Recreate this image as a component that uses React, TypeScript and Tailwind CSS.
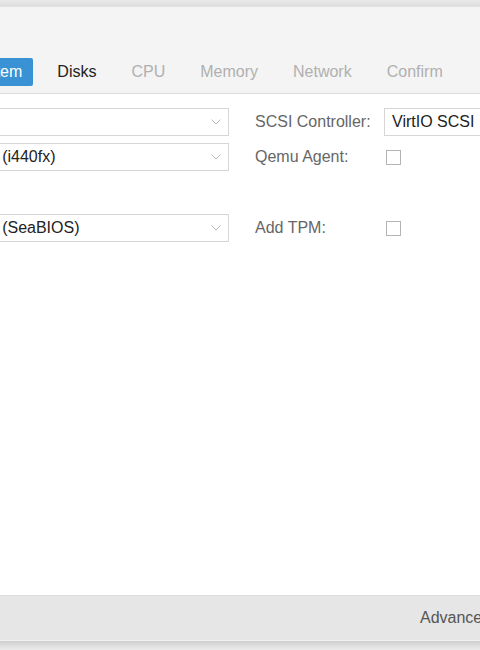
import React from 'react';

const font = { fontFamily: '"Liberation Sans", Arial, sans-serif' };

const Chevron: React.FC = () => (
    <svg width="10" height="6" viewBox="0 0 10 6" className="shrink-0">
        <path d="M0.5 0.5 L5 5 L9.5 0.5" fill="none" stroke="#b8b8b8" strokeWidth="1" />
    </svg>
);

const Combo: React.FC<{ value: string; className?: string; chevron?: boolean }> = ({ value, className, chevron = true }) => (
    <div
        className={
            'h-[28px] flex items-center justify-between border border-[#d6d6d6] bg-white pl-[7px] pr-[7px] text-[16px] text-[#222] whitespace-nowrap ' +
            (className ?? '')
        }
    >
        <span>{value}</span>
        {chevron && <Chevron />}
    </div>
);

const Checkbox: React.FC = () => (
    <div className="w-[15px] h-[15px] border border-[#b4b4b4] bg-white ml-[2px]" />
);

const tabs = [
    { label: 'System', state: 'active' },
    { label: 'Disks', state: 'next' },
    { label: 'CPU', state: 'off' },
    { label: 'Memory', state: 'off' },
    { label: 'Network', state: 'off' },
    { label: 'Confirm', state: 'off' },
];

export default function App() {
    return (
        <div className="w-[480px] h-[650px] overflow-hidden flex flex-col bg-[#f4f4f4]" style={font}>
            {/* top shadow strip */}
            <div className="h-[7px] shrink-0 bg-gradient-to-b from-[#e9e9e9] to-[#dedede] border-b border-[#e2e2e2]" />

            {/* Tab header */}
            <div className="shrink-0 pt-[51px] pb-[7px] border-b border-[#dcdcdc]">
                <div className="flex items-center gap-[13px] ml-[-42px] whitespace-nowrap">
                    {tabs.map((t) => (
                        <div
                            key={t.label}
                            className={
                                'h-[28px] px-[11px] flex items-center rounded-[2px] text-[16px] ' +
                                (t.state === 'active'
                                    ? 'bg-[#3892d4] text-white'
                                    : t.state === 'next'
                                      ? 'text-[#222]'
                                      : 'text-[#b0b0b0]')
                            }
                        >
                            {t.label}
                        </div>
                    ))}
                </div>
            </div>

            {/* Body */}
            <div className="flex-1 bg-white pt-[14px]">
                <div className="flex ml-[-61px] gap-[26px]">
                    {/* Left column */}
                    <div className="w-[290px] shrink-0 flex flex-col">
                        <Combo value="Default" />
                        <Combo value="Default (i440fx)" className="mt-[7px]" />
                        <div className="h-[43px]" />
                        <Combo value="Default (SeaBIOS)" />
                    </div>

                    {/* Right column */}
                    <div className="shrink-0 flex flex-col text-[16px] text-[#666] whitespace-nowrap">
                        <div className="h-[28px] flex items-center">
                            <span className="w-[129px]">SCSI Controller:</span>
                            <Combo value="VirtIO SCSI" chevron={false} className="w-[140px]" />
                        </div>
                        <div className="h-[28px] mt-[7px] flex items-center">
                            <span className="w-[129px]">Qemu Agent:</span>
                            <Checkbox />
                        </div>
                        <div className="h-[43px]" />
                        <div className="h-[28px] flex items-center">
                            <span className="w-[129px]">Add TPM:</span>
                            <Checkbox />
                        </div>
                    </div>
                </div>
            </div>

            {/* Footer */}
            <div className="h-[45px] shrink-0 bg-[#e6e6e6] border-t border-[#dedede] flex items-center whitespace-nowrap">
                <span className="pl-[420px] text-[16px] text-[#555]">Advanced</span>
            </div>
            <div className="h-[10px] shrink-0 bg-gradient-to-b from-[#cfcfcf] to-[#ececec] border-t border-[#f2f2f2]" />
        </div>
    );
}
